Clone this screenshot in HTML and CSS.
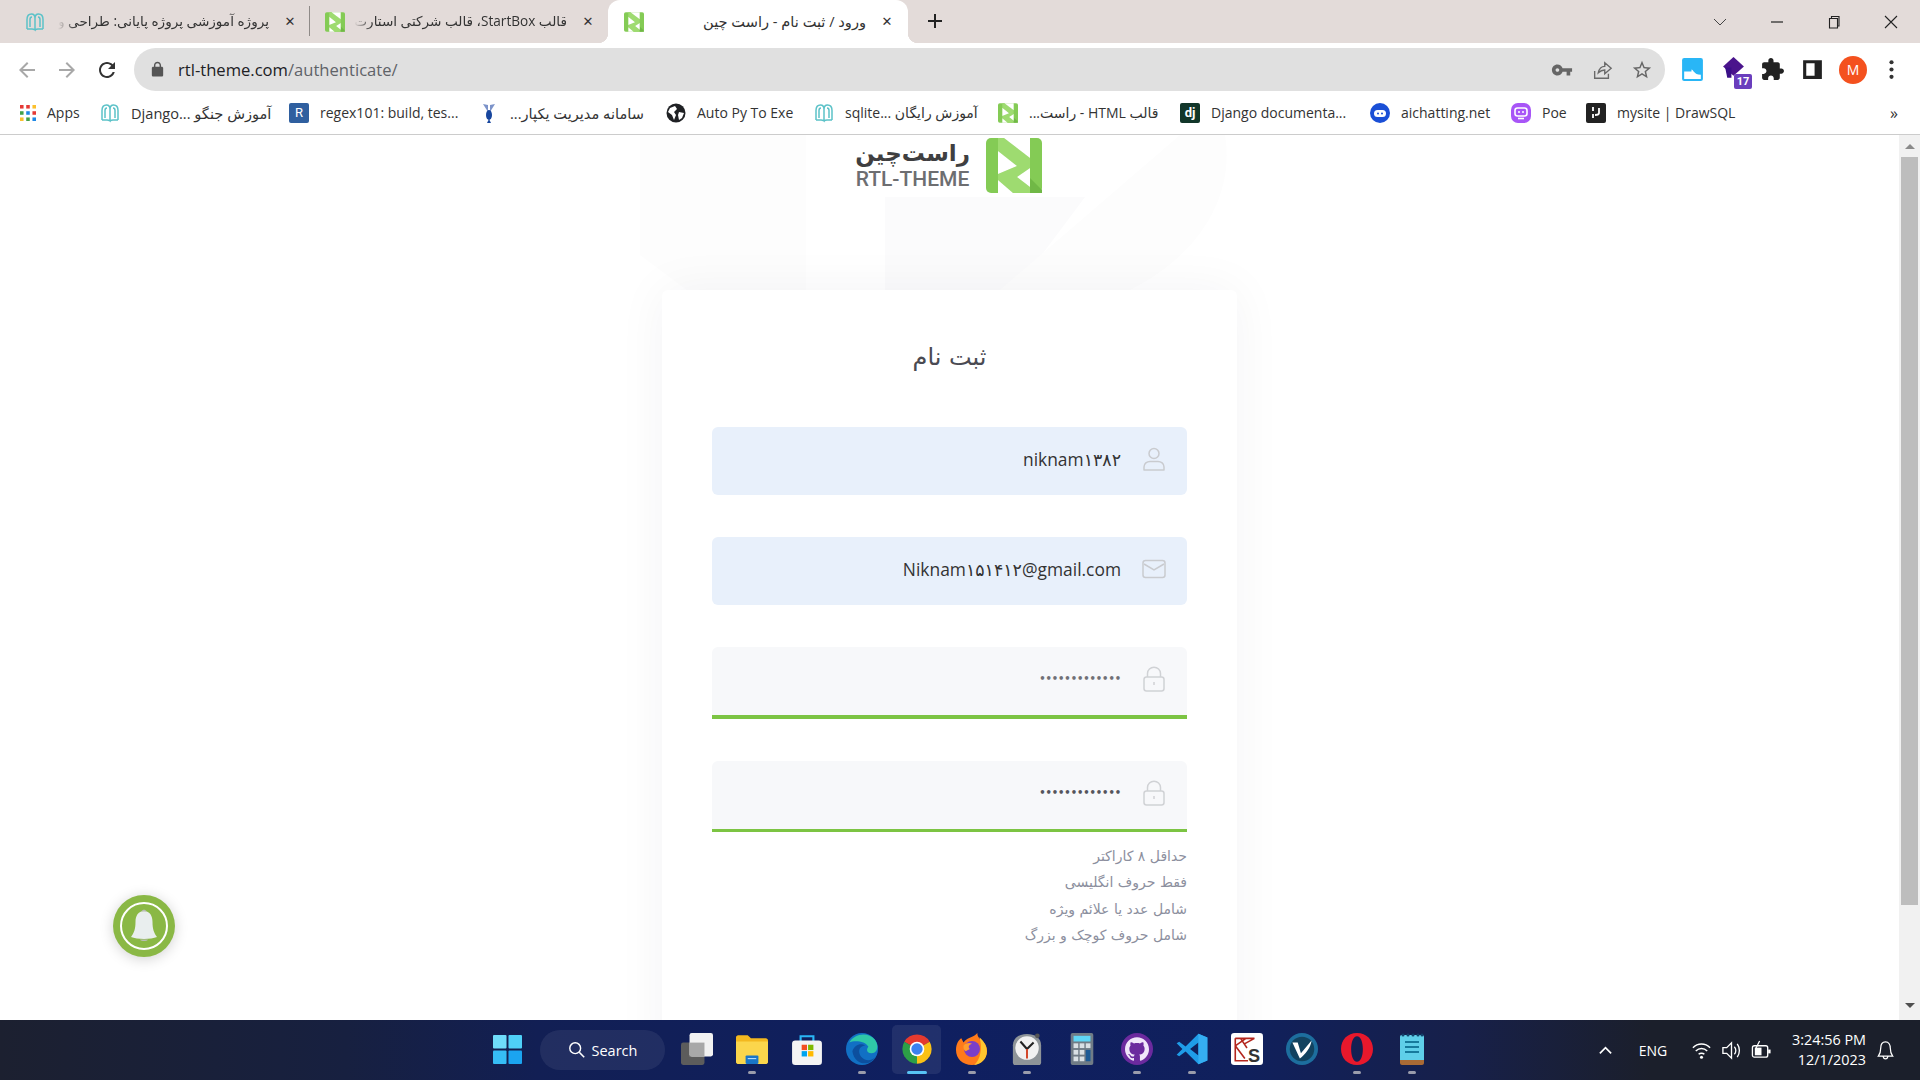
FILE: index.html
```html
<!DOCTYPE html>
<html lang="fa">
<head>
<meta charset="utf-8">
<title>ورود / ثبت نام - راست چین</title>
<link rel="stylesheet" href="styles.css">
</head>
<body>
<svg class="sprite" aria-hidden="true">
  <symbol id="rtl" viewBox="0 0 56 55">
    <rect width="56" height="55" rx="5" fill="#84cb55"/>
    <path d="M12 0H18L44 20V30L31 39L44 49V55H27L12 42V36L31 28L12 13Z" fill="#9edb70"/>
    <path d="M44 40L56 52V55H44Z" fill="#70b846"/>
    <path d="M18 0H44V20Z" fill="#fff"/>
    <path d="M12 13L31 28L12 36Z" fill="#fff"/>
    <path d="M44 30L31 39L44 49Z" fill="#fff"/>
    <path d="M12 42V55H27Z" fill="#fff"/>
  </symbol>
  <symbol id="book" viewBox="0 0 20 20">
    <path d="M2 17V7.500C2 4 4 2 6.500 2S10 4 10 6.500C10 4 11 2 13.500 2S18 4 18 7.500V17M2 17H7C8.500 17 10 18 10 18V6.500M18 17H13C11.500 17 10 18 10 18M5 15V7.500C5 6 6 5 7 5M15 15V7.500C15 6 14 5 13 5" fill="none" stroke="#5cc2c8" stroke-width="1.500"/>
  </symbol>
  <symbol id="userline" viewBox="0 0 24 24">
    <circle cx="12" cy="6.500" r="5" fill="none" stroke="currentColor" stroke-width="1.500"/>
    <path d="M2 23V20C2 16.500 5 14.500 8 14.500H16C19 14.500 22 16.500 22 20V23Z" fill="none" stroke="currentColor" stroke-width="1.500" stroke-linejoin="round"/>
  </symbol>
  <symbol id="lockline" viewBox="0 0 24 26">
    <path d="M5.500 11V7.500C5.500 4 8.500 1.200 12 1.200S18.500 4 18.500 7.500V11" fill="none" stroke="currentColor" stroke-width="1.500"/>
    <rect x="2" y="11" width="20" height="14" rx="2.500" fill="none" stroke="currentColor" stroke-width="1.500"/>
    <path d="M12 16V19" stroke="currentColor" stroke-width="1.500"/>
  </symbol>
</svg>

<header class="tabstrip">
  <div class="tab tab-one">
    <svg class="favicon"><use href="#book"/></svg>
    <span class="tab-title" dir="rtl">پروژه آموزشی پروژه پایانی: طراحی و</span>
    <span class="tab-close">✕</span>
  </div>
  <div class="tab-sep"></div>
  <div class="tab tab-two">
    <svg class="favicon"><use href="#rtl"/></svg>
    <span class="tab-title" dir="rtl">قالب StartBox، قالب شرکتی استارت</span>
    <span class="tab-close">✕</span>
  </div>
  <div class="tab tab-active">
    <svg class="favicon"><use href="#rtl"/></svg>
    <span class="tab-title" dir="rtl">ورود / ثبت نام - راست چین</span>
    <span class="tab-close">✕</span>
  </div>
  <svg class="new-tab" viewBox="0 0 16 16"><path d="M8 1V15M1 8H15" stroke="#222" stroke-width="2"/></svg>
  <div class="window-controls">
    <svg viewBox="0 0 16 16"><path d="M2 5L8 11L14 5" fill="none" stroke="#444" stroke-width="1"/></svg>
    <svg viewBox="0 0 16 16"><path d="M2 8H14" stroke="#222" stroke-width="1.200"/></svg>
    <svg viewBox="0 0 16 16"><path d="M3.500 4.500H11.500V14H3.500ZM5.500 4.500V2.500H13V12H11.500" fill="none" stroke="#222" stroke-width="1.100"/></svg>
    <svg viewBox="0 0 16 16"><path d="M2 2L14 14M14 2L2 14" stroke="#222" stroke-width="1.100"/></svg>
  </div>
</header>

<nav class="toolbar">
  <svg class="nav-icon faded" viewBox="0 0 24 24"><path d="M20 11H7.830l5.590-5.590L12 4l-8 8 8 8 1.410-1.410L7.830 13H20v-2z"/></svg>
  <svg class="nav-icon faded" viewBox="0 0 24 24"><path d="M4 11h12.170l-5.590-5.590L12 4l8 8-8 8-1.410-1.410L16.170 13H4v-2z"/></svg>
  <svg class="nav-icon" viewBox="0 0 24 24"><path d="M17.650 6.350C16.200 4.900 14.210 4 12 4c-4.420 0-7.990 3.580-7.990 8s3.570 8 7.990 8c3.730 0 6.840-2.550 7.730-6h-2.080c-.82 2.330-3.040 4-5.650 4-3.310 0-6-2.690-6-6s2.690-6 6-6c1.660 0 3.140.69 4.220 1.780L13 11h7V4l-2.350 2.350z"/></svg>
  <div class="omnibox">
    <svg class="omni-lock" viewBox="0 0 24 24"><path d="M18 8h-1V6c0-2.760-2.240-5-5-5S7 3.240 7 6v2H6c-1.100 0-2 .9-2 2v10c0 1.100.9 2 2 2h12c1.100 0 2-.9 2-2V10c0-1.100-.9-2-2-2zM9 6c0-1.660 1.340-3 3-3s3 1.340 3 3v2H9V6z"/></svg>
    <span class="url"><b>rtl-theme.com</b>/authenticate/</span>
    <span class="omni-actions">
      <svg viewBox="0 0 24 24"><path d="M12.650 10C11.830 7.670 9.610 6 7 6c-3.310 0-6 2.690-6 6s2.690 6 6 6c2.610 0 4.830-1.670 5.650-4H17v4h4v-4h2v-4H12.650zM7 14c-1.100 0-2-.9-2-2s.9-2 2-2 2 .9 2 2-.9 2-2 2z"/></svg>
      <svg viewBox="0 0 24 24"><path d="M4 13V21H19V16M8 15C9 10 12 8 15 8V4L22 10L15 16V12C12 12 10 13 8 15Z" fill="none" stroke="#6a6a6a" stroke-width="1.500"/></svg>
      <svg viewBox="0 0 24 24"><path d="M22 9.240l-7.190-.62L12 2 9.190 8.630 2 9.240l5.460 4.730L5.820 21 12 17.270 18.180 21l-1.630-7.030L22 9.240zM12 15.400l-3.760 2.270 1-4.280-3.320-2.880 4.380-.38L12 6.100l1.710 4.040 4.380.38-3.320 2.880 1 4.280L12 15.400z"/></svg>
    </span>
  </div>
  <div class="extensions">
    <svg class="ext" viewBox="0 0 24 24"><rect x="2" y="1" width="20" height="22" rx="2" fill="#29b6f6"/><path d="M4 14H11V12C13 12 13 17 20 17V21H4Z" fill="#fff"/></svg>
    <span class="ext ext-hat">
      <svg viewBox="0 0 24 24"><path d="M12 0L22 9L12 18L2 9Z" fill="#4a148c"/><path d="M4 10H10V20H6Z" fill="#3a0f88"/></svg>
      <span class="ext-badge">17</span>
    </span>
    <svg class="ext" viewBox="0 0 24 24"><path d="M20.500 11H19V7c0-1.100-.9-2-2-2h-4V3.500C13 2.120 11.880 1 10.500 1S8 2.120 8 3.500V5H4c-1.100 0-1.990.9-1.990 2v3.800H3.500c1.490 0 2.700 1.210 2.700 2.700s-1.210 2.700-2.700 2.700H2V20c0 1.100.9 2 2 2h3.800v-1.500c0-1.490 1.210-2.700 2.700-2.700 1.490 0 2.700 1.210 2.700 2.700V22H17c1.100 0 2-.9 2-2v-4h1.500c1.380 0 2.500-1.120 2.500-2.500S21.880 11 20.500 11z" fill="#222"/></svg>
    <svg class="ext" viewBox="0 0 24 24"><path fill-rule="evenodd" d="M3 3H21V21H3ZM6 6V18H14V6Z" fill="#222"/></svg>
    <span class="avatar">M</span>
    <svg class="ext ext-menu" viewBox="0 0 24 24"><circle cx="12" cy="5" r="2" fill="#333"/><circle cx="12" cy="12" r="2" fill="#333"/><circle cx="12" cy="19" r="2" fill="#333"/></svg>
  </div>
</nav>

<nav class="bookmarks">
  <a class="bm">
    <svg class="bm-icon bm-apps" viewBox="0 0 18 18"><g><rect x="0" y="0" width="4" height="4" fill="#e53935"/><rect x="7" y="0" width="4" height="4" fill="#e53935"/><rect x="14" y="0" width="4" height="4" fill="#fbc02d"/><rect x="0" y="7" width="4" height="4" fill="#43a047"/><rect x="7" y="7" width="4" height="4" fill="#1e88e5"/><rect x="14" y="7" width="4" height="4" fill="#e53935"/><rect x="0" y="14" width="4" height="4" fill="#fbc02d"/><rect x="7" y="14" width="4" height="4" fill="#43a047"/><rect x="14" y="14" width="4" height="4" fill="#1e88e5"/></g></svg>
    <span>Apps</span>
  </a>
  <a class="bm"><svg class="bm-icon"><use href="#book"/></svg><span class="bm-fa">Django... آموزش جنگو</span></a>
  <a class="bm"><span class="bm-tile tile-regex">R</span><span>regex101: build, tes...</span></a>
  <a class="bm">
    <svg class="bm-icon" viewBox="0 0 20 20"><path d="M4 1L9 9L9 2ZM16 1L11 9L11 2Z" fill="#7c93c9"/><ellipse cx="10" cy="12" rx="3" ry="5" fill="#17469e"/><path d="M10 16L12 20H8Z" fill="#17469e"/></svg>
    <span class="bm-fa" dir="rtl">سامانه مدیریت یکپار...</span>
  </a>
  <a class="bm">
    <svg class="bm-icon" viewBox="0 0 20 20"><circle cx="10" cy="10" r="9.500" fill="#1f2124"/><path d="M4 5L9 3L11 6L8 9L10 12L8 17L6 12L2 9ZM13 9L18 10L16 15L13 17L12 12Z" fill="#fff"/></svg>
    <span>Auto Py To Exe</span>
  </a>
  <a class="bm"><svg class="bm-icon"><use href="#book"/></svg><span>sqlite... آموزش رایگان</span></a>
  <a class="bm"><svg class="bm-icon"><use href="#rtl"/></svg><span dir="rtl">قالب HTML - راست...</span></a>
  <a class="bm"><span class="bm-tile tile-dj">dj</span><span>Django documenta...</span></a>
  <a class="bm">
    <svg class="bm-icon" viewBox="0 0 20 20"><circle cx="10" cy="10" r="10" fill="#1a4fd6"/><rect x="4" y="7" width="12" height="7" rx="3.500" fill="#fff"/><circle cx="8" cy="10.500" r="1" fill="#1a4fd6"/><circle cx="12" cy="10.500" r="1" fill="#1a4fd6"/></svg>
    <span>aichatting.net</span>
  </a>
  <a class="bm">
    <svg class="bm-icon" viewBox="0 0 20 20"><rect width="20" height="20" rx="7" fill="#a855f7"/><rect x="4" y="5" width="12" height="8" rx="2.500" fill="none" stroke="#fff" stroke-width="1.600"/><circle cx="8" cy="9" r="1" fill="#fff"/><circle cx="12" cy="9" r="1" fill="#fff"/><path d="M7 15.500H13" stroke="#fff" stroke-width="1.600"/></svg>
    <span>Poe</span>
  </a>
  <a class="bm">
    <svg class="bm-icon" viewBox="0 0 20 20"><rect width="20" height="20" rx="2" fill="#222"/><path d="M7 4V8M7 11V15M13 5V10C13 12 11 12 9 12" fill="none" stroke="#fff" stroke-width="1.800"/></svg>
    <span>mysite | DrawSQL</span>
  </a>
  <span class="bm-more">»</span>
</nav>

<div class="viewport">
  <main class="page">
    <svg class="page-art" viewBox="0 0 1899 885" aria-hidden="true">
      <path d="M885 62L1085 62L915 290L885 255Z" fill="#fbfbfc"/>
      <path d="M640 0H806V300H760L720 180L640 120Z" fill="#fdfdfd"/>
      <path d="M1000 155L1180 0H1225C1235 60 1200 120 1130 155Z" fill="#fdfdfd"/>
    </svg>
    <div class="brand">
      <div class="brand-text">
        <span class="brand-fa">راست‌چین</span>
        <span class="brand-en">RTL-THEME</span>
      </div>
      <svg class="brand-mark"><use href="#rtl"/></svg>
    </div>
    <section class="card">
      <h1 class="card-title">ثبت نام</h1>
      <div class="field field-filled">
        <span class="field-value">niknam۱۳۸۲</span>
        <svg class="field-icon"><use href="#userline"/></svg>
      </div>
      <div class="field field-filled">
        <span class="field-value">Niknam۱۵۱۴۱۲@gmail.com</span>
        <svg class="field-icon" viewBox="0 0 24 20"><rect x="1" y="1.500" width="22" height="17" rx="2.500" fill="none" stroke="currentColor" stroke-width="1.500"/><path d="M2 5L12 11L22 5" fill="none" stroke="currentColor" stroke-width="1.500"/></svg>
      </div>
      <div class="field field-valid">
        <span class="field-dots dim">•••••••••••••</span>
        <svg class="field-icon icon-lock"><use href="#lockline"/></svg>
      </div>
      <div class="field field-valid thin">
        <span class="field-dots">•••••••••••••</span>
        <svg class="field-icon icon-lock"><use href="#lockline"/></svg>
      </div>
      <ul class="hints" dir="rtl">
        <li>حداقل ۸ کاراکتر</li>
        <li>فقط حروف انگلیسی</li>
        <li>شامل عدد یا علائم ویژه</li>
        <li>شامل حروف کوچک و بزرگ</li>
      </ul>
    </section>
    <button class="bell-btn" aria-label="اعلان">
      <svg viewBox="0 0 48 48"><circle cx="24" cy="24" r="23" fill="none" stroke="#fff" stroke-width="2"/><path d="M24 9C18 9 15.500 14 15.500 20C15.500 27 14 31 11 35C17 37.500 31 37.500 37 35C34 31 32.500 27 32.500 20C32.500 14 30 9 24 9Z" fill="#e9eeee"/><path d="M20 37.500C21 39.500 27 39.500 28 37.500Z" fill="#b9bdb6"/><path d="M21.500 9.500C22 7 26 7 26.500 9.500Z" fill="#b9bdb6"/></svg>
    </button>
  </main>
  <aside class="scrollbar">
    <span class="arrow-up"></span>
    <span class="thumb"></span>
    <span class="arrow-down"></span>
  </aside>
</div>

<footer class="taskbar">
  <div class="slot">
    <svg class="tb tb-win" viewBox="0 0 30 30"><g fill="#3cc4f5"><rect x="0" y="0" width="14" height="14" rx="1" fill="#6fdcfa"/><rect x="16" y="0" width="14" height="14" rx="1" fill="#4fd0f8"/><rect x="0" y="16" width="14" height="14" rx="1" fill="#36bdf5"/><rect x="16" y="16" width="14" height="14" rx="1" fill="#1ba4f0"/></g></svg>
  </div>
  <div class="search-pill">
    <svg viewBox="0 0 20 20"><circle cx="8" cy="8" r="6" fill="none" stroke="#fff" stroke-width="1.600"/><path d="M12.500 12.500L18 18" stroke="#fff" stroke-width="1.800"/></svg>
    <span>Search</span>
  </div>
  <div class="slot">
    <svg class="tb" viewBox="0 0 30 30"><rect x="0" y="9" width="22" height="21" rx="2" fill="#5c5c5c"/><rect x="8" y="0" width="22" height="22" rx="2" fill="#f2f2f2"/><rect x="8" y="9" width="14" height="13" fill="#a8a8a8"/></svg>
  </div>
  <div class="slot on">
    <svg class="tb" viewBox="0 0 30 30"><path d="M0 4C0 3 1 2 2 2H11L14 5H28C29 5 30 6 30 7V27C30 28 29 29 28 29H2C1 29 0 28 0 27Z" fill="#f3b81f"/><path d="M0 8H30V27C30 28 29 29 28 29H2C1 29 0 28 0 27Z" fill="#fbd64c"/><rect x="9" y="21" width="12" height="8" rx="1" fill="#1976c8"/><path d="M11 24H19" stroke="#bde3ff" stroke-width="1"/></svg>
  </div>
  <div class="slot">
    <svg class="tb" viewBox="0 0 30 30"><path d="M9 8V3H21V8" fill="none" stroke="#29b6f6" stroke-width="2"/><rect x="1" y="7" width="28" height="23" rx="3" fill="#f4f4f4"/><rect x="10" y="11" width="5" height="5" fill="#f25022"/><rect x="16" y="11" width="5" height="5" fill="#7fba00"/><rect x="10" y="17" width="5" height="5" fill="#00a4ef"/><rect x="16" y="17" width="5" height="5" fill="#ffb900"/></svg>
  </div>
  <div class="slot on">
    <svg class="tb" viewBox="0 0 30 30"><circle cx="15" cy="15" r="15" fill="#1170c4"/><path d="M3 9C7 1 20-2 27 6C31 11 30 19 24 19C19 19 19 15 21 13C18 7 7 7 3 9Z" fill="#2fc8a8"/><path d="M6 17C8 11 14 9 18 12C12 12 11 18 14 22C17 26 23 27 27 23C23 31 8 31 6 17Z" fill="#0c4f9e"/></svg>
  </div>
  <div class="slot active on wide">
    <svg class="tb" viewBox="0 0 48 48"><path d="M24 24L5 13A22 22 0 0 1 43 13Z" fill="#e53a2f"/><path d="M24 24L43 13A22 22 0 0 1 24 46Z" fill="#fbc116"/><path d="M24 24L24 46A22 22 0 0 1 5 13Z" fill="#2c9f47"/><circle cx="24" cy="24" r="11" fill="#fff"/><circle cx="24" cy="24" r="8.500" fill="#3b82f0"/></svg>
  </div>
  <div class="slot on">
    <svg class="tb" viewBox="0 0 30 30"><path d="M15 30C6 30 0 24 0 16C0 10 3 6 5 5L7 9C9 6 12 5 14 4C17 3 19 1 20 0C20 3 21 4 23 6C27 9 29 12 29 17C29 24 23 30 15 30Z" fill="#ff7a1a"/><path d="M22 4C25 7 29 11 29 17C29 24 24 29 17 30C23 25 25 14 22 4Z" fill="#ffc52e"/><circle cx="15" cy="15" r="7.500" fill="#7a3fc8"/><path d="M7 12C9 9 13 9 15 10C12 11 11 13 13 15L9 17C7 16 7 14 7 12Z" fill="#ff9d2e"/></svg>
  </div>
  <div class="slot on">
    <svg class="tb" viewBox="0 0 30 34"><path d="M0 13C0 5 7 1 15 1S30 5 30 13V31C30 33 29 34 28 34H2C1 34 0 33 0 31Z" fill="#8e9498"/><circle cx="15" cy="16" r="12.500" fill="#f1f1f1"/><path d="M15 17L8 9M15 17L22 10" stroke="#222" stroke-width="2.200"/><path d="M15 17V27" stroke="#d13d1f" stroke-width="2"/><circle cx="26" cy="3" r="2.500" fill="#555"/></svg>
  </div>
  <div class="slot">
    <svg class="tb" viewBox="0 0 24 34"><rect width="24" height="34" rx="2" fill="#707c86"/><rect x="3" y="3" width="18" height="6" fill="#5fd6f5"/><g fill="#d9e0e4"><rect x="3" y="11" width="5" height="5"/><rect x="9.500" y="11" width="5" height="5"/><rect x="16" y="11" width="5" height="5"/><rect x="3" y="18" width="5" height="5"/><rect x="9.500" y="18" width="5" height="5"/><rect x="3" y="25" width="5" height="5"/><rect x="9.500" y="25" width="5" height="5"/></g><rect x="16" y="18" width="5" height="12" fill="#1c5a94"/></svg>
  </div>
  <div class="slot on">
    <svg class="tb" viewBox="0 0 24 24"><circle cx="12" cy="12" r="12" fill="#6b2a9e"/><g transform="translate(3 3) scale(.75)"><path d="M12 .297c-6.630 0-12 5.373-12 12 0 5.303 3.438 9.800 8.205 11.385.6.113.82-.258.82-.577 0-.285-.01-1.040-.015-2.040-3.338.724-4.042-1.610-4.042-1.610C4.422 18.070 3.633 17.700 3.633 17.700c-1.087-.744.084-.729.084-.729 1.205.084 1.838 1.236 1.838 1.236 1.070 1.835 2.809 1.305 3.495.998.108-.776.417-1.305.76-1.605-2.665-.3-5.466-1.332-5.466-5.930 0-1.310.465-2.380 1.235-3.220-.135-.303-.54-1.523.105-3.176 0 0 1.005-.322 3.300 1.230.96-.267 1.980-.399 3-.405 1.020.006 2.040.138 3 .405 2.280-1.552 3.285-1.230 3.285-1.230.645 1.653.24 2.873.12 3.176.765.84 1.230 1.910 1.230 3.220 0 4.610-2.805 5.625-5.475 5.920.42.36.81 1.096.81 2.220 0 1.606-.015 2.896-.015 3.286 0 .315.21.69.825.57C20.565 22.092 24 17.592 24 12.297c0-6.627-5.373-12-12-12" fill="#f0e6fa"/></g></svg>
  </div>
  <div class="slot on">
    <svg class="tb" viewBox="0 0 100 100"><path fill-rule="evenodd" d="M70 2L30 42L10 27L2 32L20 50L2 68L10 73L30 58L70 98L98 86V14ZM70 30L44 50L70 70Z" fill="#1f9ce8"/><path d="M70 2L98 14V86L70 98V70V30Z" fill="#35aef2"/></svg>
  </div>
  <div class="slot">
    <svg class="tb" viewBox="0 0 30 30"><rect width="30" height="30" rx="3" fill="#fff"/><path d="M4 5H22M4 5V26H16M4 12L14 5M4 12L13 24M9 5L15 14M13 10L22 5" fill="none" stroke="#b3261e" stroke-width="1.500"/><text x="16" y="27" class="tb-s">S</text></svg>
  </div>
  <div class="slot">
    <svg class="tb" viewBox="0 0 30 30"><circle cx="15" cy="15" r="15" fill="#1d6e9e"/><circle cx="15" cy="15" r="11.500" fill="#12425f"/><path d="M6 9H11L14 19L24 7C23 14 18 20 13 24Z" fill="#fff"/></svg>
  </div>
  <div class="slot on">
    <svg class="tb" viewBox="0 0 30 30"><path fill-rule="evenodd" d="M15 0C24 0 30 6.500 30 15S24 30 15 30 0 23.500 0 15 6 0 15 0ZM15 3C11.500 3 9.500 8.500 9.500 15S11.500 27 15 27 20.500 21.500 20.500 15 18.500 3 15 3Z" fill="#e8182c"/></svg>
  </div>
  <div class="slot on">
    <svg class="tb" viewBox="0 0 24 32"><rect y="2" width="24" height="27" rx="1.500" fill="#5fcfe9"/><path d="M0 27H24V30C24 31 23 32 22 32H2C1 32 0 31 0 30Z" fill="#a96a35"/><g fill="#12426a"><circle cx="3" cy="2" r="1.500"/><circle cx="8" cy="2" r="1.500"/><circle cx="13" cy="2" r="1.500"/><circle cx="18" cy="2" r="1.500"/><circle cx="22" cy="2" r="1.500"/></g><path d="M5 9H19M5 14H19M5 19H19" stroke="#167a9c" stroke-width="2"/></svg>
  </div>
  <div class="tray">
    <span class="tray-cell w30"><svg class="tray-sm" viewBox="0 0 16 16"><path d="M2 11L8 5L14 11" fill="none" stroke="#fff" stroke-width="1.800"/></svg></span>
    <span class="tray-cell w66">ENG</span>
    <span class="tray-cell w30"><svg viewBox="0 0 22 22"><path d="M2 8C7 3 15 3 20 8M5 11.500C8.500 8 13.500 8 17 11.500M8 15C9.500 13.500 12.500 13.500 14 15" fill="none" stroke="#fff" stroke-width="1.500"/><circle cx="11" cy="18" r="1.600" fill="#fff"/></svg></span>
    <span class="tray-cell w30"><svg viewBox="0 0 22 22"><path d="M2 8H6L11 3V19L6 14H2Z" fill="none" stroke="#fff" stroke-width="1.400"/><path d="M14 7C16 9 16 13 14 15M17 4C20 8 20 14 17 18" fill="none" stroke="#fff" stroke-width="1.400"/></svg></span>
    <span class="tray-cell w30"><svg viewBox="0 0 22 22"><rect x="1.500" y="6" width="16" height="12" rx="2" fill="none" stroke="#fff" stroke-width="1.400"/><rect x="18" y="10" width="2.500" height="4" fill="#fff"/><path d="M4 8H11V16H4Z" fill="#fff"/><path d="M9 1L5 9H9L7 14" fill="none" stroke="#fff" stroke-width="1.300"/></svg></span>
    <span class="clock"><span>3:24:56 PM</span><span>12/1/2023</span></span>
    <span class="tray-cell w32"><svg viewBox="0 0 22 22"><path d="M11 2C7.500 2 6 5 6 8.500C6 12 5 15 3.500 17H18.500C17 15 16 12 16 8.500C16 5 14.500 2 11 2ZM8.500 17.500C9 20.500 13 20.500 13.500 17.500" fill="none" stroke="#fff" stroke-width="1.300"/></svg></span>
  </div>
</footer>
</body>
</html>
```

FILE: styles.css
```css
* { box-sizing: border-box; }
html, body { margin: 0; height: 100%; }
body {
  width: 1920px;
  height: 1080px;
  overflow: hidden;
  display: flex;
  flex-direction: column;
  background: #fff;
  font-family: "Open Sans", "DejaVu Sans", sans-serif;
  color: #222;
}
.sprite { width: 0; height: 0; position: absolute; }

/* tab strip */
.tabstrip {
  height: 43px;
  flex: none;
  display: flex;
  align-items: stretch;
  background: #e3dbd9;
}
.tab {
  position: relative;
  display: flex;
  align-items: center;
  flex: none;
  font-size: 13.600px;
}
.tab-one { width: 309px; padding: 0 8px 0 25px; }
.tab-two { width: 297px; padding: 0 8px 0 15px; }
.tab-active {
  width: 300px;
  padding: 0 10px 0 16px;
  margin-left: 1px;
  background: #fff;
  border-radius: 12px 12px 0 0;
  font-size: 14.600px;
}
.tab-active::before, .tab-active::after {
  content: "";
  position: absolute;
  bottom: 0;
  width: 10px;
  height: 10px;
}
.tab-active::before { left: -10px; background: radial-gradient(circle at 0 0, #e3dbd9 10px, #fff 10.500px); }
.tab-active::after { right: -10px; background: radial-gradient(circle at 100% 0, #e3dbd9 10px, #fff 10.500px); }
.tab-sep { width: 1px; height: 30px; margin-top: 6px; background: #8f8a88; flex: none; }
.favicon { width: 20px; height: 20px; flex: none; }
.tab-title {
  flex: none;
  margin-left: auto;
  white-space: nowrap;
  color: #333;
  padding-bottom: 2px;
  -webkit-mask-image: linear-gradient(90deg, transparent 0, #000 18px);
  mask-image: linear-gradient(90deg, transparent 0, #000 18px);
}
.tab-active .tab-title { -webkit-mask-image: none; mask-image: none; }
.tab-close {
  flex: none;
  width: 22px;
  margin-left: 10px;
  text-align: center;
  font-size: 13px;
  font-family: "DejaVu Sans", sans-serif;
  color: #333;
  font-weight: 700;
}
.new-tab { width: 16px; height: 16px; margin: 13px 0 0 19px; flex: none; }
.window-controls {
  margin-left: auto;
  display: flex;
  align-items: center;
  gap: 41px;
  padding-right: 21px;
}
.window-controls svg { width: 16px; height: 16px; }

/* toolbar */
.toolbar {
  height: 47px;
  flex: none;
  display: flex;
  align-items: center;
  padding: 6px 0 0 15px;
  background: #fff;
}
.nav-icon { width: 24px; height: 24px; margin-right: 16px; fill: #333; flex: none; }
.nav-icon.faded { fill: #a8a8a8; }
.omnibox {
  width: 1531px;
  height: 43px;
  margin-left: -1px;
  display: flex;
  align-items: center;
  background: #e0e0e0;
  border-radius: 22px;
  padding-left: 15px;
}
.omni-lock { width: 17px; height: 17px; fill: #555; flex: none; }
.url { margin-left: 12px; font-size: 16.600px; color: #5f6368; }
.url b { font-weight: 400; color: #202124; }
.omni-actions { margin-left: auto; display: flex; gap: 18px; padding-right: 12px; }
.omni-actions svg { width: 22px; height: 22px; fill: #666; }
.extensions { display: flex; align-items: center; margin-left: 15px; gap: 15px; }
.ext { width: 25px; height: 25px; flex: none; display: block; }
.ext-hat { position: relative; left: 1px; }
.ext-menu { margin-left: -3px; }
.ext-hat svg { width: 25px; height: 25px; display: block; }
.ext-badge {
  position: absolute;
  right: -6px;
  bottom: -7px;
  width: 18px;
  height: 15px;
  background: #6a3ebd;
  color: #fff;
  font: 700 11px/15px "Roboto", sans-serif;
  text-align: center;
  border-radius: 2px;
}
.avatar {
  width: 28px;
  height: 28px;
  margin-left: -1px;
  border-radius: 50%;
  background: #f4511e;
  color: #fff;
  font-size: 14px;
  line-height: 28px;
  text-align: center;
  flex: none;
}

/* bookmarks */
.bookmarks {
  height: 45px;
  flex: none;
  display: flex;
  align-items: center;
  padding: 1px 0 0 17px;
  border-bottom: 1px solid #ccc;
  font-size: 14px;
}
.bm { display: flex; align-items: center; gap: 11px; flex: none; white-space: nowrap; color: #333; overflow: hidden; }
.bm:nth-child(1) { width: 83px; }
.bm:nth-child(2) { width: 189px; }
.bm:nth-child(3) { width: 190px; }
.bm:nth-child(4) { width: 187px; }
.bm:nth-child(5) { width: 148px; }
.bm:nth-child(6) { width: 184px; }
.bm:nth-child(7) { width: 182px; }
.bm:nth-child(8) { width: 190px; }
.bm:nth-child(9) { width: 141px; }
.bm:nth-child(10) { width: 75px; }
.bm:nth-child(11) { width: 150px; }
.bm-icon { width: 20px; height: 20px; flex: none; }
.bm-apps { width: 16px; height: 16px; margin-left: 3px; }
.bm-fa { font-size: 14.600px; }
.bm-tile {
  width: 20px;
  height: 20px;
  flex: none;
  color: #fff;
  border-radius: 2px;
  font: 700 13px/20px "Roboto", sans-serif;
  text-align: center;
}
.tile-regex { background: #2f5f9f; font-weight: 400; }
.tile-dj { background: #12362a; }
.bm-more { margin-left: auto; margin-right: 22px; font-size: 16px; color: #333; }

/* page */
.viewport { flex: 1; min-height: 0; display: flex; }
.page {
  position: relative;
  flex: 1;
  min-width: 0;
  overflow: hidden;
  display: flex;
  flex-direction: column;
  align-items: center;
  padding-top: 3px;
  background: #fff;
}
.page-art { position: absolute; left: 0; top: 0; width: 1899px; height: 885px; }
.brand {
  position: relative;
  display: flex;
  align-items: center;
  gap: 16px;
  height: 55px;
  margin: 0 2px 97px 0;
}
.brand-text { display: flex; flex-direction: column; align-items: center; width: 114px; }
.brand-fa { font: 700 23px/26px "DejaVu Sans", sans-serif; color: #3f3f41; white-space: nowrap; }
.brand-en { font: 500 21px/26px "Roboto", sans-serif; color: #6d6e71; white-space: nowrap; }
.brand-mark { width: 56px; height: 55px; }
.card {
  position: relative;
  width: 575px;
  flex: none;
  padding: 50px 50px 120px;
  background: #fff;
  border-radius: 6px;
  box-shadow: 0 0 50px rgba(30, 40, 60, .05);
}
.card-title {
  margin: 0 0 53px;
  font: 400 24px/34px "DejaVu Sans", sans-serif;
  color: #4a4a52;
  text-align: center;
}
.field {
  height: 68px;
  margin-bottom: 42px;
  display: flex;
  align-items: center;
  justify-content: flex-end;
  gap: 21px;
  padding: 0 21px 4px 0;
  border-radius: 6px;
  font-size: 17.400px;
  color: #333;
}
.field-filled { background: #e8f0fb; }
.field-valid {
  height: 72px;
  background: #f7f8fa;
  border-bottom: 4px solid #7cc443;
  border-radius: 6px 6px 0 0;
}
.field-valid.thin { height: 71px; border-bottom-width: 3px; margin-bottom: 0; }
.field-value { white-space: nowrap; }
.field-icon { width: 24px; height: 24px; flex: none; color: #c9cbcf; }
.icon-lock { height: 26px; color: #d0d2d5; }
.field-dots { font: 700 10px/1 "DejaVu Sans", sans-serif; letter-spacing: -0.100px; color: #55555c; white-space: nowrap; }
.field-dots.dim { color: #707076; }
.hints {
  list-style: none;
  margin: 11px 0 0;
  padding: 0;
  font: 400 14px/26.400px "DejaVu Sans", sans-serif;
  color: #8c8f9e;
}
.bell-btn {
  position: absolute;
  left: 113px;
  top: 760px;
  width: 62px;
  height: 62px;
  padding: 7px;
  border: 0;
  border-radius: 50%;
  background: #8ab845;
  box-shadow: 0 2px 14px rgba(0, 0, 0, .18);
}
.bell-btn svg { width: 48px; height: 48px; display: block; }
.scrollbar {
  width: 21px;
  flex: none;
  background: #f1f1f1;
  display: flex;
  flex-direction: column;
  align-items: center;
}
.thumb { width: 17px; height: 748px; background: #bdbdbd; margin-top: 8px; }
.arrow-up, .arrow-down { width: 0; height: 0; border-left: 5px solid transparent; border-right: 5px solid transparent; }
.arrow-up { margin-top: 9px; border-bottom: 5px solid #8a8a8a; }
.arrow-down { margin-top: 98px; border-top: 5px solid #505050; }

/* taskbar */
.taskbar {
  height: 60px;
  flex: none;
  display: flex;
  align-items: center;
  padding-left: 480px;
  background: linear-gradient(90deg, #1c2030 0, #172040 18%, #121f54 28%, #0f1f60 48%, #10205c 65%, #17204a 76%, #1b1f2b 86%);
  color: #fff;
  font-size: 14px;
}
.slot {
  position: relative;
  width: 55px;
  height: 60px;
  flex: none;
  display: flex;
  align-items: center;
  justify-content: center;
  padding-bottom: 2px;
}
.tb { width: 32px; height: 32px; display: block; }
.tb-win { width: 29px; height: 29px; }
.slot.on::after {
  content: "";
  position: absolute;
  left: 23.500px;
  bottom: 6px;
  width: 8px;
  height: 3px;
  border-radius: 2px;
  background: #9a9cab;
}
.slot.active::before {
  content: "";
  position: absolute;
  left: 3px;
  top: 5px;
  width: 49px;
  height: 49px;
  border-radius: 5px;
  background: rgba(255, 255, 255, .08);
}
.slot.active::after { left: 18px; width: 20px; background: #58c3f5; }
.slot.active .tb { position: relative; }
.tb-s { font: 700 17px "Liberation Sans", sans-serif; fill: #333; }
.search-pill {
  width: 125px;
  height: 40px;
  margin: 0 4px 0 5px;
  flex: none;
  border-radius: 20px;
  background: rgba(255, 255, 255, .07);
  display: flex;
  align-items: center;
  justify-content: center;
  gap: 6px;
  font-size: 14.500px;
}
.search-pill svg { width: 18px; height: 18px; }
.tray { position: absolute; left: 1590px; bottom: 0; height: 60px; display: flex; align-items: center; }
.tray-cell { display: flex; align-items: center; justify-content: center; flex: none; }
.tray-cell svg { width: 21px; height: 21px; }
.tray-cell .tray-sm { width: 15px; height: 15px; }
.w30 { width: 30px; }
.w32 { width: 32px; margin-left: -1px; }
.w66 { width: 66px; font-size: 14px; }
.clock {
  width: 94px;
  padding-right: 4px;
  display: flex;
  flex-direction: column;
  align-items: flex-end;
  font-size: 14.400px;
  line-height: 20px;
  flex: none;
}
```
